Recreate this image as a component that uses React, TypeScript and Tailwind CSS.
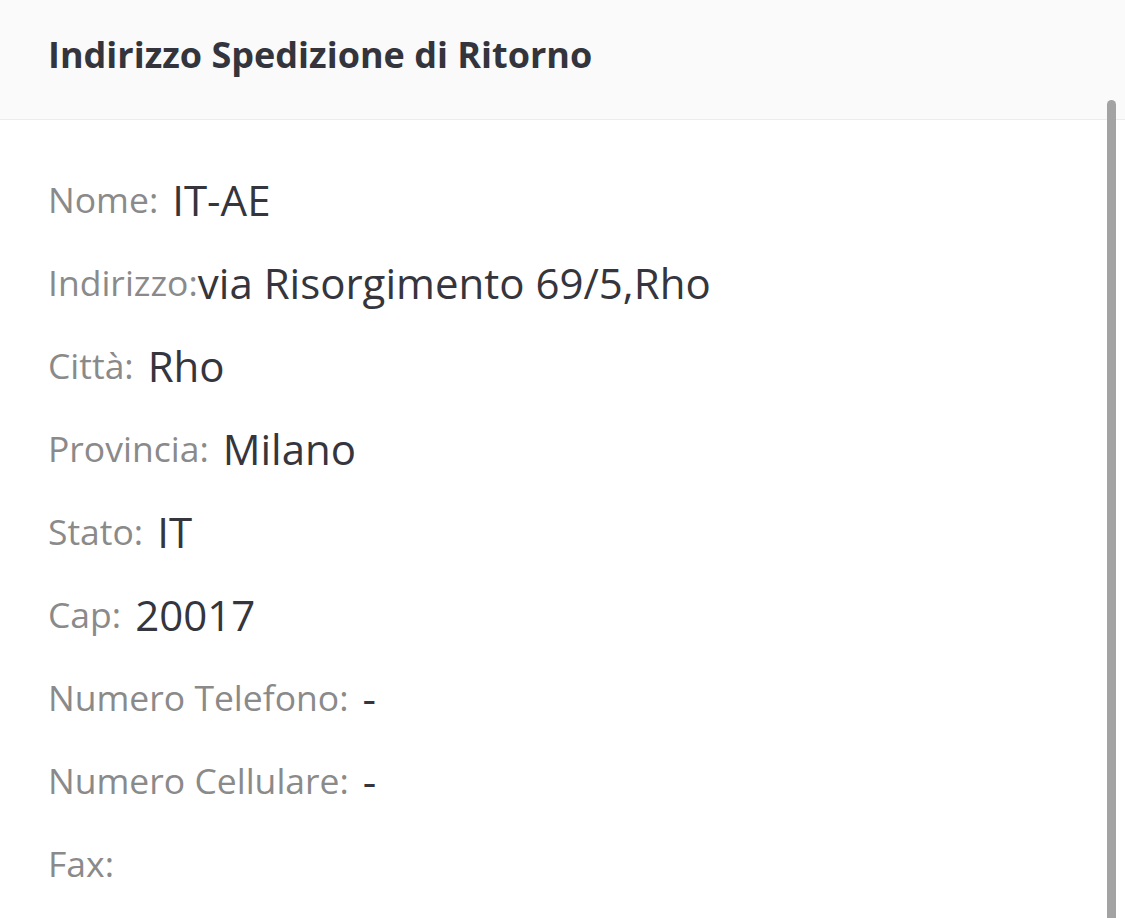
import React from 'react';

// Return shipping address card (mobile layout, rendered at 3x)
const rows: { label: string; value: string; tight?: boolean }[] = [
  { label: 'Nome:', value: 'IT-AE' },
  { label: 'Indirizzo:', value: 'via Risorgimento 69/5,Rho', tight: true },
  { label: 'Città:', value: 'Rho' },
  { label: 'Provincia:', value: 'Milano' },
  { label: 'Stato:', value: 'IT' },
  { label: 'Cap:', value: '20017' },
  { label: 'Numero Telefono:', value: '-' },
  { label: 'Numero Cellulare:', value: '-' },
  { label: 'Fax:', value: '' },
];

export default function App() {
  return (
    <div
      className="relative h-[918px] w-[1125px] overflow-hidden bg-white"
      style={{ fontFamily: '"Open Sans", "Noto Sans", sans-serif' }}
    >
      <div className="flex h-[120px] items-center border-b border-[#ececec] bg-[#fafafa] pb-[10px] pl-[48px]">
        <h1 className="text-[36px] font-bold leading-none text-[#34343c]">Indirizzo Spedizione di Ritorno</h1>
      </div>

      <div className="pl-[48px] pt-[38px]">
        {rows.map((r) => (
          <div key={r.label} className="flex h-[83px] items-center">
            <span className="text-[35.5px] text-[#8a8a8a]">{r.label}</span>
            <span className={`text-[42px] text-[#35353d] ${r.tight ? 'ml-0' : 'ml-[14px]'}`}>{r.value}</span>
          </div>
        ))}
      </div>

      {/* overlay scrollbar */}
      <div className="absolute right-[9px] top-[100px] h-[830px] w-[9px] rounded-full bg-[#a3a3a3]" />
    </div>
  );
}
